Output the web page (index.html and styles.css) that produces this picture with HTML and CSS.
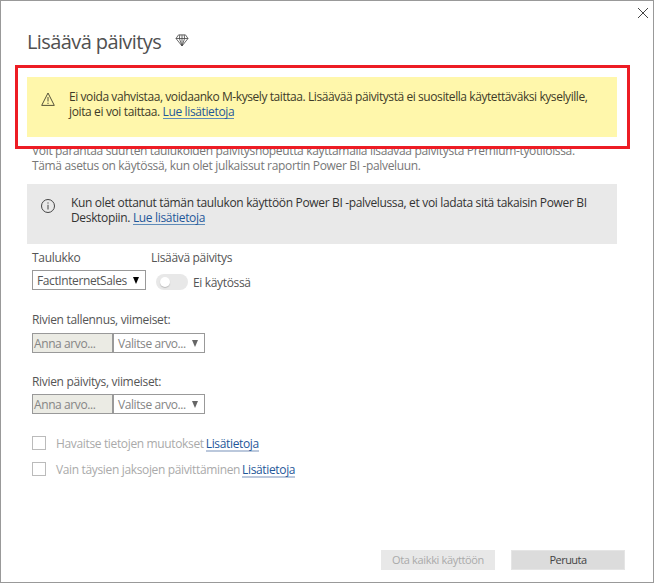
FILE: index.html
```html
<!DOCTYPE html>
<html lang="fi">
<head>
<meta charset="utf-8">
<title>Lisäävä päivitys</title>
<link rel="stylesheet" href="styles.css">
</head>
<body>
<main class="dialog">
  <button class="close" aria-label="Sulje"><svg width="12" height="12" viewBox="0 0 12 12"><path d="M1 1L11 11M11 1L1 11"/></svg></button>
  <header class="head">
    <h1>Lisäävä päivitys</h1>
    <svg class="gem" width="14" height="13" viewBox="0 0 14 13"><path d="M3.5 .9H10.5L13 4.5L7 12L1 4.5ZM1 4.5H13M4.8 .9L4.4 4.5L7 12L9.6 4.5L9.2 .9M7 .9V11"/></svg>
  </header>
  <section class="highlight">
    <div class="banner warning">
      <svg class="icon" width="14" height="14" viewBox="0 0 14 14"><path d="M7 1L13.3 13.4H.7ZM7 5V9.5M7 10.7V12"/></svg>
      <p><span class="line w1">Ei voida vahvistaa, voidaanko M-kysely taittaa. Lisäävää päivitystä ei suositella käytettäväksi kyselyille,</span><span class="line w2">joita ei voi taittaa. <a href="#">Lue lisätietoja</a></span></p>
    </div>
  </section>
  <p class="intro"><span class="line">Voit parantaa suurten taulukoiden päivitysnopeutta käyttämällä lisäävää päivitystä Premium-työtiloissa.</span><span class="line">Tämä asetus on käytössä, kun olet julkaissut raportin Power BI -palveluun.</span></p>
  <div class="banner info">
    <svg class="icon" width="14" height="14" viewBox="0 0 14 14"><circle cx="7" cy="7" r="6.5"/><path d="M7 5.8V10.5M7 3.4V4.6"/></svg>
    <p><span class="line">Kun olet ottanut tämän taulukon käyttöön Power BI -palvelussa, et voi ladata sitä takaisin Power BI</span><span class="line">Desktopiin. <a href="#">Lue lisätietoja</a></span></p>
  </div>
  <form class="form">
    <div class="pair">
      <div class="table-col">
        <div class="label">Taulukko</div>
        <div class="select table-select"><span>FactInternetSales</span><i class="arrow"></i></div>
      </div>
      <div>
        <div class="label">Lisäävä päivitys</div>
        <div class="toggle-row"><span class="toggle"></span><span>Ei käytössä</span></div>
      </div>
    </div>
    <div class="label">Rivien tallennus, viimeiset:</div>
    <div class="period"><div class="amount">Anna arvo...</div><div class="select unit"><span>Valitse arvo...</span><i class="arrow"></i></div></div>
    <div class="label">Rivien päivitys, viimeiset:</div>
    <div class="period"><div class="amount">Anna arvo...</div><div class="select unit"><span>Valitse arvo...</span><i class="arrow"></i></div></div>
    <div class="check"><span class="box"></span><span>Havaitse tietojen muutokset</span><a href="#">Lisätietoja</a></div>
    <div class="check"><span class="box"></span><span>Vain täysien jaksojen päivittäminen</span><a href="#">Lisätietoja</a></div>
  </form>
  <footer class="actions"><div class="btn disabled">Ota kaikki käyttöön</div><div class="btn cancel">Peruuta</div></footer>
</main>
</body>
</html>
```
FILE: styles.css
```css
* { box-sizing: border-box; }
body { margin: 0; background: #fff; font: 12px/15px "Open Sans", "Noto Sans", sans-serif; color: #555; letter-spacing: -0.34px; }
p, h1 { margin: 0; }
svg { display: block; fill: none; stroke: #444; stroke-width: 1; flex: none; }
.dialog { position: relative; width: 654px; height: 583px; border: 1px solid #999; display: flex; flex-direction: column; }
.close { position: absolute; top: 6px; right: 4px; padding: 0; border: 0; background: none; }
.head { display: flex; align-items: flex-start; gap: 14px; height: 64px; padding: 26px 0 0 26px; }
h1 { width: 134px; font-size: 20px; line-height: 30px; font-weight: 400; color: #505050; white-space: nowrap; letter-spacing: -0.6px; }
.gem { margin-top: 7px; stroke-width: .8; }
.highlight { position: relative; z-index: 1; width: 615px; height: 84px; margin: 0 0 -6px 14px; padding: 9px; border: 3px solid #ed1c24; background: #fff; }
.banner { display: flex; height: 60px; white-space: nowrap; }
.warning { width: 590px; padding: 12px 0 0 14px; background: #fff7ab; color: #3e3b28; }
.warning .icon { margin: 3px 14px 0 0; stroke: #55523a; }
.w1 { letter-spacing: -0.425px; }
.w2 { letter-spacing: -0.37px; }
.info { width: 590px; margin: 11px 0 0 26px; padding: 11px 0 0 14px; background: #e9e9e9; color: #333; }
.info .icon { margin: 4px 16px 0 0; }
.line { display: block; height: 15px; }
.intro { margin-left: 31px; color: #777; white-space: nowrap; }
a { color: #1f5799; text-decoration: none; }
.banner a { display: inline-block; height: 15px; border-bottom: 1px solid #5e8bb8; }
.form { margin-left: 31px; padding-top: 6px; }
.label { height: 15px; white-space: nowrap; letter-spacing: -0.32px; }
.pair { display: flex; height: 62px; }
.table-col { width: 119px; }
.select { display: flex; align-items: center; justify-content: space-between; height: 20px; border: 1px solid #999; padding: 1px 6px 0 4px; white-space: nowrap; background: #fff; }
.table-select { width: 114px; margin-top: 5px; letter-spacing: -0.4px; }
.arrow { width: 0; height: 0; border: solid transparent; border-width: 7px 3.5px 0; border-top-color: #000; margin-top: -1px; }
.toggle-row { display: flex; align-items: center; gap: 5px; margin: 9px 0 0 5px; height: 16px; }
.toggle { width: 32px; height: 16px; border-radius: 8px; background: #e8e8e8; padding: 3px 4px; }
.toggle::before { content: ""; display: block; width: 10px; height: 10px; border-radius: 50%; background: #fff; box-shadow: 0 1px 1px #bbb; }
.period { display: flex; height: 20px; margin: 6px 0 21px; color: #858585; }
.period + .label + .period { margin-top: 5px; margin-bottom: 22px; }
.amount { width: 81px; border: 1px solid #999; background: #ebebe4; padding: 2px 0 0 1px; letter-spacing: -0.4px; }
.unit { width: 92px; letter-spacing: -0.41px; }
.unit .arrow { border-top-color: #666; }
.check { display: flex; height: 14px; margin-bottom: 12px; color: #aaa; white-space: nowrap; letter-spacing: -0.35px; }
.box { width: 14px; height: 14px; border: 1px solid #bbb; margin-right: 10px; }
.check a { height: 16px; border-bottom: 2px solid #bbc8dc; margin-left: 2px; }
.actions { display: flex; gap: 16px; margin: auto 28px 12px auto; }
.btn { width: 114px; height: 20px; font-size: 11px; line-height: 20px; text-align: center; background: #e8e8e8; color: #aaa; }
.cancel { background: #dcdcdc; border: 1px solid #e5e5e5; line-height: 18px; color: #444; letter-spacing: -0.55px; }
```
